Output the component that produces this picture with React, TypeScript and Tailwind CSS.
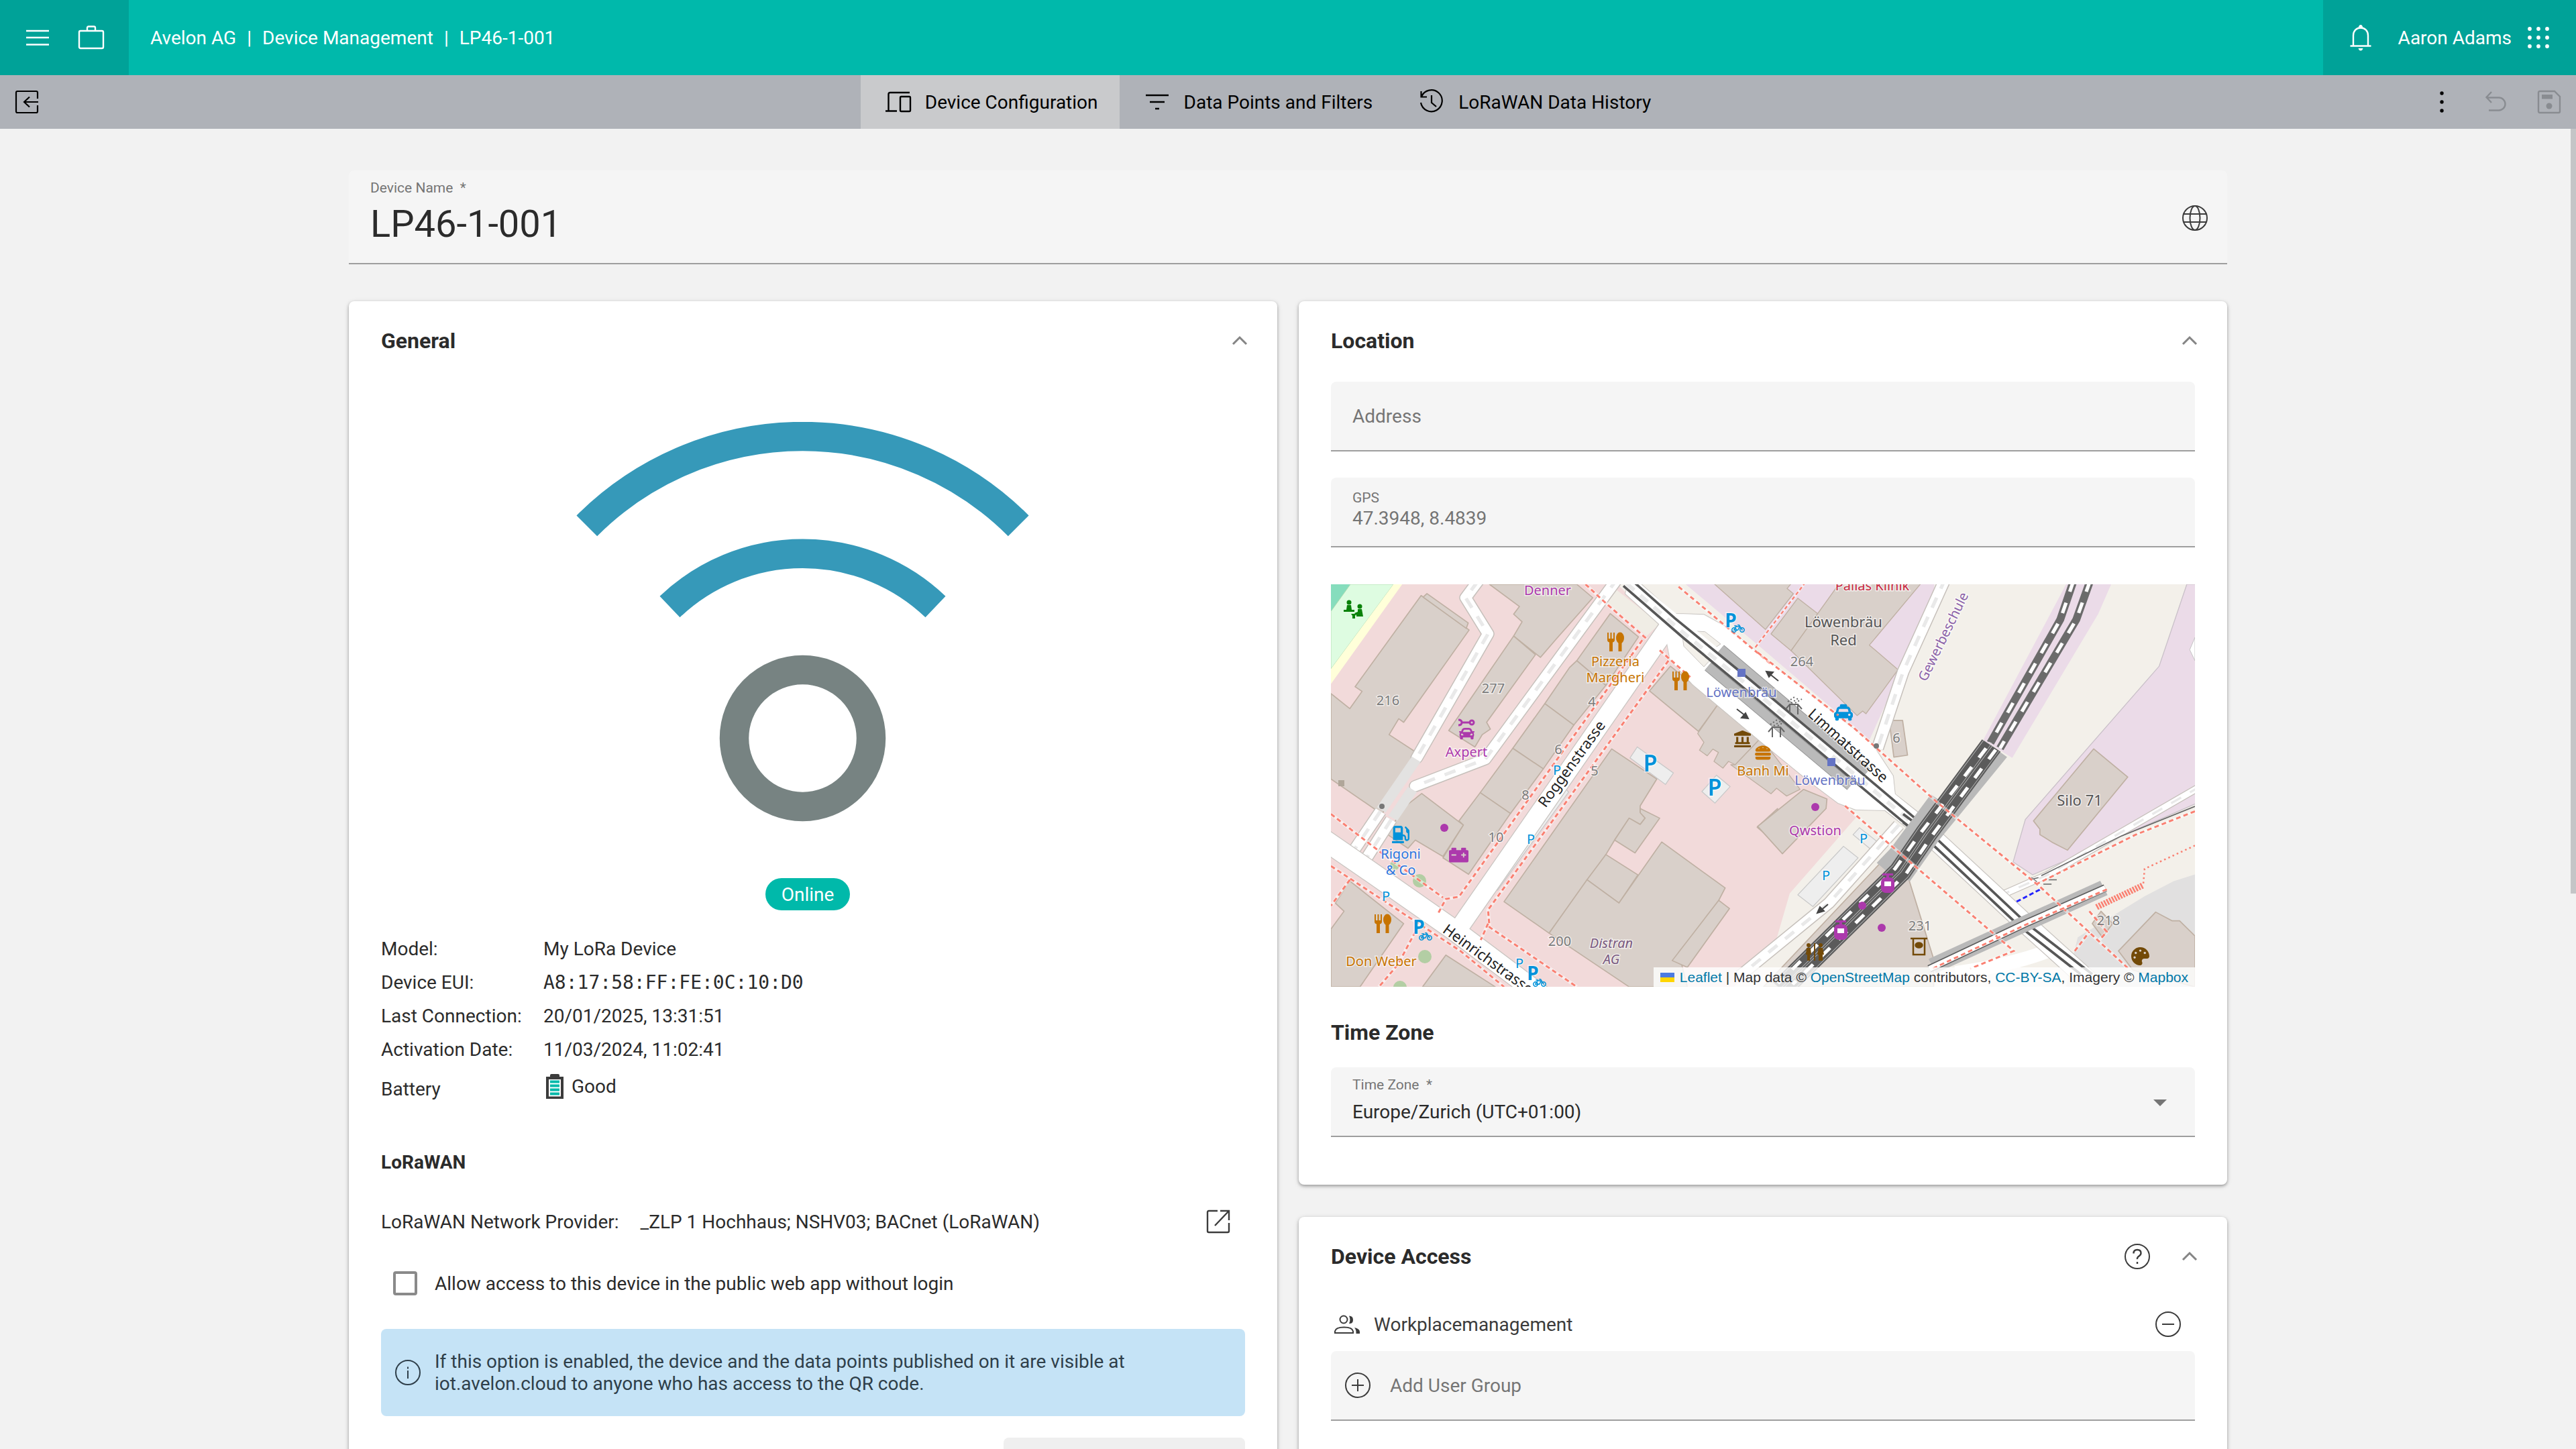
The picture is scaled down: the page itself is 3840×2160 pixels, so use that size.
import type { ReactNode } from "react";
import {
  FaBicycle,
  FaCar,
  FaCarBattery,
  FaGasPump,
  FaHamburger,
  FaLandmark,
  FaPalette,
  FaTaxi,
} from "react-icons/fa";

/* ---------- icons ---------- */

function MenuIcon() {
  return (
    <svg className="h-10 w-10" viewBox="0 0 40 40" stroke="currentColor" strokeWidth="2.6" aria-hidden="true">
      <path d="M3 10H37M3 20H37M3 30.500H37" />
    </svg>
  );
}

function CaseIcon() {
  return (
    <svg className="h-10 w-10" viewBox="0 0 40 40" fill="none" stroke="currentColor" strokeWidth="2.4" aria-hidden="true">
      <rect x="2" y="10" width="36" height="26" rx="2" />
      <path d="M14 10V5.500q0-2 2-2h8q2 0 2 2V10" />
    </svg>
  );
}

function BellIcon() {
  return (
    <svg className="h-10 w-10" viewBox="0 0 40 40" fill="none" stroke="currentColor" strokeWidth="2.4" aria-hidden="true">
      <path d="M9 32V17C9 10 13.500 5.500 20 5.500S31 10 31 17V32M4.500 32.500H35.500" />
      <path d="M16.500 6.500Q17 1 20 1t3.500 5.500ZM16.500 36h7q-1 3.500-3.500 3.500T16.500 36Z" fill="currentColor" stroke="none" />
    </svg>
  );
}

function AppsIcon() {
  const steps = [7, 20, 33];
  return (
    <svg className="h-10 w-10" viewBox="0 0 40 40" fill="currentColor" aria-hidden="true">
      {steps.map((y) => steps.map((x) => <circle key={`${x}-${y}`} cx={x} cy={y} r="2.900" />))}
    </svg>
  );
}

function LeaveIcon() {
  return (
    <svg className="h-10 w-10" viewBox="0 0 40 40" fill="none" stroke="currentColor" strokeWidth="2.200" aria-hidden="true">
      <path d="M36 15V6q0-2-2-2H6Q4 4 4 6V34q0 2 2 2H34q2 0 2-2V25M37 20H16M24 12.500L16 20l8 7.500" />
    </svg>
  );
}

function DevicesIcon() {
  return (
    <svg className="h-10 w-10" viewBox="0 0 40 40" fill="none" stroke="currentColor" strokeWidth="2.400" aria-hidden="true">
      <path d="M37 6H8Q5.500 6 5.500 8.500V33M1 33.500H18" />
      <rect x="23" y="12" width="15" height="22" rx="1.500" />
    </svg>
  );
}

function FilterIcon() {
  return (
    <svg className="h-10 w-10" viewBox="0 0 40 40" stroke="currentColor" strokeWidth="2.400" aria-hidden="true">
      <path d="M3 10H37M9 20H31M17 30H23" />
    </svg>
  );
}

function HistoryIcon() {
  return (
    <svg className="h-10 w-10" viewBox="0 0 40 40" fill="none" stroke="currentColor" strokeWidth="2.200" aria-hidden="true">
      <path d="M5 12A16 16 0 1 1 4 21M4.500 4V12.500H13M20 10V21l7 6" />
    </svg>
  );
}

function DotsIcon() {
  return (
    <svg className="h-10 w-10" viewBox="0 0 40 40" fill="currentColor" aria-hidden="true">
      <circle cx="20" cy="7" r="2.700" />
      <circle cx="20" cy="20" r="2.700" />
      <circle cx="20" cy="33" r="2.700" />
    </svg>
  );
}

function UndoIcon() {
  return (
    <svg className="h-10 w-10" viewBox="0 0 40 40" fill="none" stroke="currentColor" strokeWidth="2.400" aria-hidden="true">
      <path d="M14 5L6.500 13L14 21M6.500 13.500H25A9.500 9.500 0 0 1 25 32.500H10" />
    </svg>
  );
}

function SaveIcon() {
  return (
    <svg className="h-10 w-10" viewBox="0 0 40 40" fill="none" stroke="currentColor" strokeWidth="2.400" aria-hidden="true">
      <path d="M6 4H28L36 12V34q0 2-2 2H6q-2 0-2-2V6q0-2 2-2Z" />
      <rect x="9" y="9" width="16" height="6.500" fill="currentColor" stroke="none" />
      <circle cx="20" cy="26" r="4.500" fill="currentColor" stroke="none" />
    </svg>
  );
}

function GlobeIcon() {
  return (
    <svg className="h-10 w-10" viewBox="0 0 40 40" fill="none" stroke="currentColor" strokeWidth="2" aria-hidden="true">
      <circle cx="20" cy="20" r="18" />
      <ellipse cx="20" cy="20" rx="7.500" ry="18" />
      <path d="M3 14H37M3 26H37" />
    </svg>
  );
}

function ChevronUp() {
  return (
    <svg className="h-7 w-7" viewBox="0 0 28 28" fill="none" stroke="currentColor" strokeWidth="3" aria-hidden="true">
      <path d="M4 19L14 9L24 19" />
    </svg>
  );
}

function RoundIcon({ children }: { children?: ReactNode }) {
  return (
    <svg className="h-10 w-10 shrink-0" viewBox="0 0 40 40" fill="none" stroke="currentColor" strokeWidth="2" aria-hidden="true">
      <circle cx="20" cy="20" r="18" />
      {children}
    </svg>
  );
}

function OpenIcon() {
  return (
    <svg className="h-10 w-10" viewBox="0 0 40 40" fill="none" stroke="currentColor" strokeWidth="2.400" aria-hidden="true">
      <path d="M19 4H6Q4 4 4 6V34q0 2 2 2H34q2 0 2-2V22M23 4H36V18M36 4L15 26" />
    </svg>
  );
}

function GroupIcon() {
  return (
    <svg className="h-10 w-10" viewBox="0 0 40 40" fill="none" stroke="currentColor" strokeWidth="2" aria-hidden="true">
      <circle cx="15" cy="13" r="5.500" />
      <path d="M2 33V30.500Q3 24.500 15.500 24.500T29 30.500V33Z" />
      <path d="M23 7.500q6 0 6 6t-6 5.500q3-5.500 0-11.500ZM31 25q8 1.500 8 6.500V34H33.500Q34 28.500 31 25Z" fill="currentColor" stroke="none" />
    </svg>
  );
}

function BatteryIcon() {
  return (
    <svg className="h-[37px] w-[26px]" viewBox="0 0 26 37" aria-hidden="true">
      <path d="M6 4V2q0-2 2-2H18q2 0 2 2V4h6V37H0V4ZM4 8V33.500H22V8Z" fill="#3c3c3c" fillRule="evenodd" />
      <path d="M6 9.500H20V13.500H6ZM6 15.500H20V19.500H6ZM6 21.500H20V25.500H6ZM6 27.500H20V31.500H6Z" fill="#00b9aa" />
    </svg>
  );
}

function SignalArt() {
  return (
    <svg className="h-[596px] w-[675px]" viewBox="0 0 675 596" fill="none" strokeWidth="43.500" role="img" aria-label="LoRa device">
      <path d="M15.800 154.800A455 455 0 0 1 659.200 154.800" stroke="#3699b9" />
      <path d="M139.500 275.500A287 287 0 0 1 535.500 275.500" stroke="#3699b9" />
      <circle cx="337.500" cy="471.500" r="102" stroke="#778382" />
    </svg>
  );
}

/* ---------- map ---------- */

const WEST = "scale(.4337 .4082) translate(-55 -51)";
const EAST = "translate(660 0) scale(.4337 .4082) translate(-55 -51)";
const CENTRE = "translate(456 -1) scale(.3333)";

const westBuildings = [
  "365,92 530,218 305,555 288,542 255,600 370,680 230,890 55,762 55,450 120,505 162,442 138,425",
  "385,85 527,192 520,212 372,98",
  "600,51 900,51 955,100 830,250 775,318 683,240 712,188 683,160 703,132",
  "683,240 758,308 590,555 603,580 575,600 550,645 460,585",
  "1015,158 1112,243 1000,420 900,330",
  "875,355 900,330 1000,420 890,565 790,487",
  "790,487 890,565 785,725 680,650",
  "680,650 785,725 672,888 568,812",
  "568,812 672,888 528,1110 440,1050 510,930 495,915",
  "367,815 510,930 440,1045 345,985 320,1015 250,965 300,870",
  "1020,652 1175,762 1118,860 1118,880 1135,905 1118,928 1080,905 1030,985 1000,1038 805,1325 650,1210",
  "1118,870 1185,905 1100,1032 1030,985 1080,905 1118,928 1135,905 1118,885",
  "1000,1038 1110,1112 1045,1215 935,1130",
  "1192,992 1410,1160 1388,1205 1385,1215 1250,1395 1280,1521 1080,1521 805,1325 935,1130 1045,1215",
  "1388,1205 1425,1235 1280,1450 1228,1425 1250,1395",
  "120,1135 305,1290 155,1521 55,1521 55,1310 100,1245 70,1215",
  "450,1405 620,1521 370,1521",
  "1222,350 1385,490 1318,588 1150,440",
  "1590,870 1520,938 1600,1010",
];

const centreBuildings = [
  "345,0 690,0 672,22 700,45 575,205",
  "720,65 810,135 690,300 600,225",
  "905,0 1270,0 1040,275 1168,385 1025,582 1010,570 985,590 690,300",
  "360,545 555,690 440,810 410,795 385,825 345,795 365,755 340,740 315,770 280,745 300,710 272,670",
  "555,690 730,920 670,950 625,915 600,940 420,810 440,810",
];

const eastBuildings = [
  "158,800 238,835 235,870 85,1035 0,935",
  "452,548 498,548 515,675 468,682",
  "1155,652 1272,755 1065,1022 1015,995 970,965 970,945 948,915",
  "425,1065 520,1130 605,1420 605,1521 20,1521",
  "1368,1248 1425,1280 1450,1280 1503,1335 1503,1521 1290,1460 1240,1390",
  "1150,1290 1180,1245 1220,1290 1185,1340",
];

const lots = [
  { zone: WEST, points: "1108,645 1232,740 1205,782 1083,685" },
  { zone: WEST, points: "1380,748 1427,790 1375,850 1330,808" },
  { zone: WEST, points: "860,795 872,810 628,1168 618,1155" },
  { zone: EAST, points: "295,1008 345,1050 190,1228 138,1185" },
  { zone: EAST, points: "350,940 410,990 390,1020 328,965" },
];

const footpaths = [
  { zone: WEST, d: "M930 51L1000 120L1140 250M1125 255L495 1192L450 1200L425 1250" },
  { zone: WEST, d: "M1185 292L1290 390M1215 330L595 1240L600 1303L900 1521M595 1290L570 1350" },
  { zone: WEST, d: "M55 890L220 1025L440 1195M55 1080L500 1390L650 1521M345 1320L285 1440L220 1521M120 1130L55 1225" },
  { zone: WEST, d: "M1250 60L1430 220L1570 345" },
  { zone: CENTRE, d: "M530 285L750 0" },
  { zone: EAST, d: "M0 300L330 575L620 850L970 1155L1280 1460" },
  { zone: EAST, d: "M300 860L480 1025L880 1390L730 1455M1090 1390L1140 1320" },
  { zone: EAST, d: "M1503 880L1300 965L960 1145" },
  { zone: EAST, d: "M1200 1165L930 1290L600 1455" },
  { zone: EAST, d: "M1140 1245L1200 1320L1175 1350" },
];

type Label = { text: string; x: number; y: number; fill: string; size?: number; weight?: number; rotate?: number; italic?: boolean };

const GREY = "#7b7b7b";
const FOOD = "#c77400";
const SHOP = "#ac39ac";
const STOP = "#6473c4";
const BLUE = "#0092da";

const labels: Label[] = [
  { text: "Denner", x: 323, y: 16, fill: SHOP },
  { text: "216", x: 85, y: 180, fill: GREY },
  { text: "277", x: 242, y: 162, fill: GREY },
  { text: "4", x: 389, y: 182, fill: GREY },
  { text: "6", x: 339, y: 253, fill: GREY },
  { text: "5", x: 393, y: 285, fill: GREY },
  { text: "8", x: 290, y: 321, fill: GREY },
  { text: "10", x: 246, y: 384, fill: GREY },
  { text: "200", x: 341, y: 539, fill: GREY },
  { text: "264", x: 702, y: 122, fill: GREY },
  { text: "6", x: 843, y: 236, fill: GREY },
  { text: "231", x: 878, y: 516, fill: GREY },
  { text: "218", x: 1159, y: 508, fill: GREY },
  { text: "Pizzeria", x: 424, y: 122, fill: FOOD },
  { text: "Margheri", x: 424, y: 146, fill: FOOD },
  { text: "Banh Mi", x: 644, y: 285, fill: FOOD },
  { text: "Don Weber", x: 75, y: 569, fill: FOOD },
  { text: "Axpert", x: 202, y: 257, fill: SHOP },
  { text: "Qwstion", x: 722, y: 374, fill: SHOP },
  { text: "Rigoni", x: 104, y: 409, fill: "#2b76e0" },
  { text: "& Co", x: 104, y: 433, fill: "#2b76e0" },
  { text: "Distran", x: 418, y: 542, fill: "#7a5a80", italic: true },
  { text: "AG", x: 418, y: 566, fill: "#7a5a80", italic: true },
  { text: "Löwenbräu", x: 764, y: 64, fill: "#555555", size: 22 },
  { text: "Red", x: 764, y: 91, fill: "#555555", size: 22 },
  { text: "Silo 71", x: 1116, y: 330, fill: "#555555", size: 22 },
  { text: "Löwenbräu", x: 612, y: 168, fill: STOP },
  { text: "Löwenbräu", x: 744, y: 299, fill: STOP },
  { text: "Pallas Klinik", x: 807, y: 9, fill: "#c8283f" },
  { text: "Roggenstrasse", x: 365, y: 272, fill: "#222222", size: 22, rotate: -54 },
  { text: "Heinrichstrasse", x: 230, y: 565, fill: "#222222", size: 22, rotate: 36 },
  { text: "Limmatstrasse", x: 766, y: 246, fill: "#222222", size: 22, rotate: 42 },
  { text: "Gewerbeschule", x: 919, y: 81, fill: "#8b62a8", rotate: -64 },
  { text: "P", x: 476, y: 279, fill: BLUE, size: 34, weight: 600 },
  { text: "P", x: 572, y: 315, fill: BLUE, size: 34, weight: 600 },
  { text: "P", x: 337, y: 284, fill: BLUE },
  { text: "P", x: 298, y: 387, fill: BLUE },
  { text: "P", x: 82, y: 472, fill: BLUE },
  { text: "P", x: 281, y: 572, fill: BLUE },
  { text: "P", x: 794, y: 386, fill: BLUE },
  { text: "P", x: 738, y: 441, fill: BLUE },
  { text: "P", x: 596, y: 64, fill: BLUE, size: 28, weight: 700 },
  { text: "P", x: 131, y: 521, fill: BLUE, size: 28, weight: 700 },
  { text: "P", x: 301, y: 590, fill: BLUE, size: 28, weight: 700 },
];

function Cutlery({ x, y }: { x: number; y: number }) {
  return (
    <g transform={`translate(${x} ${y})`} fill={FOOD}>
      <path d="M0 0h2v9h2.500V0h2v9H9V0h2v11q0 2.500-3 3.500V28H3V14.500Q0 13.500 0 11Z" />
      <ellipse cx="19" cy="8" rx="6" ry="8.500" />
      <path d="M16.500 14h5V28h-5Z" />
    </g>
  );
}

function Lift({ x, y }: { x: number; y: number }) {
  return (
    <g transform={`translate(${x} ${y})`}>
      <rect x="0" y="6" width="20" height="23" rx="7" fill={SHOP} />
      <path d="M2 0H18V3H2ZM8 3h4v4H8Z" fill={SHOP} />
      <rect x="5" y="12" width="10" height="7" fill="#ffffff" />
    </g>
  );
}

function Shelter({ x, y }: { x: number; y: number }) {
  return (
    <g transform={`translate(${x} ${y})`} fill="none" stroke="#666666">
      <path d="M0 16L6 9H18L24 16M6 10V24M18 10V24" strokeWidth="2" />
      <path d="M3 5L13-2M8 7L20-1M14 7L24 1" strokeWidth="2" strokeDasharray="2 3" />
    </g>
  );
}

function StreetMap() {
  return (
    <svg
      className="absolute inset-0 h-full w-full bg-[#f3f0ea]"
      viewBox="0 0 1288 600"
      preserveAspectRatio="xMidYMid slice"
      role="img"
      aria-label="Street map around 47.3948, 8.4839"
    >
      {/* land use */}
      <g transform={WEST}>
        <polygon points="270,51 1040,51 1180,200 1862,900 1632,1180 1580,1370 1440,1521 55,1521 55,380" fill="#f2dada" />
        <polygon points="55,51 122,51 55,150" fill="#86ddbd" />
        <polygon points="122,51 270,51 55,360 55,150" fill="#defce1" stroke="#a9d8a9" strokeWidth="2" />
        <polygon points="270,51 300,51 55,415 55,360" fill="#ffffd9" />
        <polygon points="1035,70 1185,195 1140,240 1000,115" fill="#f0ede5" />
      </g>
      <g transform={CENTRE}>
        <polygon points="215,0 1330,0 1330,60 1040,700 560,290" fill="#ebdbe8" />
      </g>
      <g transform={EAST}>
        <polygon points="645,51 500,370 400,650 1000,640 1060,51" fill="#f3f0ea" />
        <polygon points="1060,51 1215,51 1170,160 875,685 775,620" fill="#ebdbe8" />
        <polygon points="1475,51 1510,51 1510,850 945,1112 878,1065 920,910 1380,350" fill="#ebdbe8" stroke="#c9c0c8" strokeWidth="3" />
        <polygon points="1510,1108 1430,1135 1330,1190 1100,1340 1060,1521 1510,1521" fill="#e1e0e0" />
        <polygon points="1503,245 1485,290 1503,330" fill="#ffffff" stroke="#bbbbbb" strokeWidth="2" />
      </g>

      {/* buildings */}
      <g fill="#d9d0ca" stroke="#bfb0a3" strokeWidth="4" strokeLinejoin="round">
        <g transform={WEST}>{westBuildings.map((p) => <polygon key={p} points={p} />)}</g>
        <g transform={CENTRE}>{centreBuildings.map((p) => <polygon key={p} points={p} />)}</g>
        <g transform={EAST}>{eastBuildings.map((p) => <polygon key={p} points={p} />)}</g>
      </g>
      <g fill="#eeeeee" stroke="#c8c8c8" strokeWidth="3">
        {lots.map((l) => <polygon key={l.points} points={l.points} transform={l.zone} />)}
      </g>

      {/* trees */}
      <g fill="#a9cc9b" opacity="0.85">
        <circle cx="132" cy="442" r="10" />
        <circle cx="95" cy="419" r="7" />
        <circle cx="140" cy="555" r="10" />
        <circle cx="103" cy="601" r="10" />
      </g>

      {/* service roads: casing, surface, centre dashes */}
      {[
        { stroke: "#c6c0bb", w: 44, thin: 28, dash: undefined },
        { stroke: "#ffffff", w: 37, thin: 22, dash: undefined },
        { stroke: "#e9e9e9", w: 12, thin: 8, dash: "40 36" },
      ].map((s) => (
        <g key={s.stroke} fill="none" stroke={s.stroke} strokeWidth={s.w} strokeDasharray={s.dash} strokeLinejoin="round">
          <g transform={WEST}>
            <path d="M560 40L518 100L595 232L350 685" strokeLinecap={s.dash ? "butt" : "round"} />
            <path d="M1040 30L585 690L345 788" strokeLinecap={s.dash ? "butt" : "round"} />
            <path d="M225 880L110 1060M262 910L160 1080" />
          </g>
          <g transform={EAST}>
            <path d="M645 30L500 370L412 650M485 930L245 1215L-60 1480" />
            <path d="M1520 790L1000 1110L850 1180" strokeWidth={s.thin} />
          </g>
        </g>
      ))}
      <g transform={WEST} fill="none" stroke="#e3e2e1" strokeWidth="36">
        <path d="M348 690L228 875M335 800L268 905" />
      </g>
      <g transform={EAST} fill="none" stroke="#ffffff" strokeWidth="50">
        <path d="M1010 1385Q880 1440 680 1470" />
      </g>

      {/* streets */}
      {[
        { stroke: "#c9c5c1", extra: 6 },
        { stroke: "#ffffff", extra: 0 },
      ].map((s) => (
        <g key={s.stroke} fill="none" stroke={s.stroke} strokeLinejoin="round">
          <g transform={WEST}>
            <path d="M1215 205L480 1330" strokeWidth={62 + s.extra} />
            <path d="M20 975L170 1085L480 1315L800 1570" strokeWidth={72 + s.extra} />
          </g>
          <g transform={CENTRE}>
            <polygon
              points="-30,-40 165,135 300,140 400,195 1050,715 1145,860 1155,955 1120,1013 980,1010 900,980 780,890 560,710 250,450 150,340 135,260 100,180 -50,45"
              fill="#ffffff"
              strokeWidth={s.extra + 2}
            />
          </g>
          <g transform={EAST}>
            <path d="M380 785L560 935L910 1280L1150 1510" strokeWidth={66 + s.extra} />
          </g>
        </g>
      ))}

      {/* tram line and platforms */}
      <g transform={CENTRE}>
        <polygon points="245,212 305,215 375,270 345,290" fill="#f3f0ea" stroke="#c9c5c1" strokeWidth="3" />
        <polygon points="205,245 325,345 300,372 210,280" fill="#f3f0ea" stroke="#c9c5c1" strokeWidth="3" />
        <path d="M-30 5L1250 1060" fill="none" stroke="#ffffff" strokeWidth="62" />
        <path d="M375 292L1028 845M318 370L955 905" fill="none" stroke="#979797" strokeWidth="46" />
        <path d="M375 292L1028 845M318 370L955 905" fill="none" stroke="#bababa" strokeWidth="40" />
        <path d="M-45 0L190 205L490 450L1020 892L1250 1085" fill="none" stroke="#ffffff" strokeWidth="44" />
        <path d="M-45 0L190 205L490 450L1020 892L1250 1085" fill="none" stroke="#eaeaea" strokeWidth="18" strokeDasharray="44 36" />
        <path d="M-45 -35L170 155L480 408L1030 868L1290 1088" fill="none" stroke="#575757" strokeWidth="11" />
        <path d="M-60 10L205 240L500 485L1010 915L1230 1098" fill="none" stroke="#575757" strokeWidth="11" />
      </g>
      <g transform={EAST} fill="none" stroke="#575757" strokeWidth="9">
        <path d="M500 890L620 985L925 1290L1150 1475M500 920L600 1000L900 1300L1110 1475" />
      </g>

      {/* railway */}
      <g transform={EAST} fill="none">
        <path d="M1085 40L1040 180L800 630M1142 40L1095 180L833 650" stroke="#6b6b6b" strokeWidth="27" />
        <path d="M1085 40L1040 180L800 630M1142 40L1095 180L833 650" stroke="#ffffff" strokeWidth="12" strokeDasharray="40 42" />
        <path d="M835 665L600 970L500 1120" stroke="#b9b9b9" strokeWidth="56" />
        <path d="M640 850L500 1050L450 1105" stroke="#b9b9b9" strokeWidth="110" />
        <path d="M803 640L580 960L490 1100L80 1530" stroke="#5b5b5b" strokeWidth="78" />
        <path d="M803 640L580 960L490 1100L80 1530" stroke="#bdbdbd" strokeWidth="68" />
        <path d="M803 640L580 960L490 1100L80 1530" stroke="#5b5b5b" strokeWidth="64" />
        <path d="M803 640L580 960L490 1100L80 1530" stroke="#bdbdbd" strokeWidth="9" />
        <path d="M803 640L580 960L490 1100L80 1530" stroke="#5b5b5b" strokeWidth="5" />
        <path d="M785 650L563 955L472 1090L70 1508" stroke="#ffffff" strokeWidth="12" strokeDasharray="42 42" />
        <path d="M818 655L600 968L510 1108L120 1512" stroke="#ffffff" strokeWidth="12" strokeDasharray="42 42" />
      </g>

      {/* footbridge */}
      <g transform={EAST} fill="none">
        <path d="M1190 1160L930 1285L600 1445" stroke="#b9b9b9" strokeWidth="58" />
        <path d="M1195 1160L930 1285L590 1455" stroke="#5c5c5c" strokeWidth="28" />
        <path d="M1195 1160L930 1285L590 1455" stroke="#ffffff" strokeWidth="20" />
        <path d="M1165 1230L1325 1150" stroke="#fa8072" strokeWidth="22" strokeDasharray="6 4" />
        <path d="M1503 1005L1330 1090L1325 1150" stroke="#fa8072" strokeWidth="6" strokeDasharray="6 10" />
        <path d="M890 1210L975 1163" stroke="#2222ff" strokeWidth="7" strokeDasharray="16 9" />
        <path d="M1503 862L1250 970L975 1115M935 1130L965 1122M940 1122L960 1138M1000 1130h28M982 1146h28" stroke="#666666" strokeWidth="4" />
      </g>

      {/* footpaths */}
      {footpaths.map((f) => (
        <g key={f.d} transform={f.zone} fill="none">
          <path d={f.d} stroke="#ffffff" strokeOpacity="0.5" strokeWidth="12" />
          <path d={f.d} stroke="#fa8072" strokeWidth="7" strokeDasharray="16 11" />
        </g>
      ))}

      {/* one-way arrows */}
      <g stroke="#444444" fill="#444444" strokeWidth="2">
        <path d="M667 144L652 132M649 130l10 1l-6 7Z" />
        <path d="M605 186L618 196M622 200l-10-1l6-7Z" />
        <path d="M741 477L729 487M725 490l4-9l6 6Z" />
      </g>

      {/* markers */}
      <g fill={STOP}>
        <rect x="606" y="126" width="12" height="12" />
        <rect x="740" y="259" width="12" height="12" />
      </g>
      <g fill={SHOP}>
        <circle cx="169" cy="363" r="6" />
        <circle cx="722" cy="332" r="6" />
        <circle cx="792" cy="479" r="6" />
        <circle cx="821" cy="512" r="6" />
      </g>
      <g fill="#777777">
        <circle cx="76" cy="331" r="4" />
        <circle cx="813" cy="241" r="4" />
        <rect x="11" y="292" width="9" height="9" fill="#b0a699" />
      </g>
      <g fill="#0a820a">
        <circle cx="27" cy="27" r="3.500" />
        <circle cx="43" cy="33" r="3.500" />
        <path d="M24 31h6l1 7h4v3H19v-3h4ZM40 37h6l2 11H38v-2l-3-3 5-2ZM30 44h8l-2 3v4h-4v-4Z" />
      </g>
      <Cutlery x={412} y={72} />
      <Cutlery x={509} y={130} />
      <Cutlery x={65} y={492} />
      <Lift x={820} y={431} />
      <Lift x={750} y={501} />
      <Shelter x={678} y={170} />
      <Shelter x={652} y={204} />
      <g fill="none" stroke={SHOP} strokeWidth="3">
        <path d="M190 202q5 0 5 4t-5 4M195 206H207" />
        <circle cx="210" cy="206" r="3" />
      </g>
      <FaCar x="191" y="211" size="23" color={SHOP} />
      <FaGasPump x="91" y="360" size="26" color={BLUE} />
      <FaCarBattery x="176" y="389" size="29" color={SHOP} />
      <FaLandmark x="601" y="218" size="25" color="#734a08" />
      <FaHamburger x="632" y="239" size="24" color={FOOD} />
      <FaTaxi x="750" y="177" size="28" color={BLUE} />
      <FaBicycle x="597" y="56" size="20" color={BLUE} />
      <FaBicycle x="131" y="515" size="20" color={BLUE} />
      <FaBicycle x="301" y="584" size="20" color={BLUE} />
      <FaPalette x="1193" y="541" size="27" color="#734a08" />
      <g transform="translate(864 526)" fill="none" stroke="#734a08" strokeWidth="2.500">
        <path d="M0 2H25M4 2V26H21V2" />
        <ellipse cx="12.500" cy="12" rx="5" ry="3.500" fill="#734a08" />
      </g>
      <g transform="translate(708 535)" fill="#734a08">
        <circle cx="4" cy="3" r="3" />
        <circle cx="22" cy="3" r="3" />
        <path d="M1 7H7L8 17H6V26H2V17H0ZM19 7h6l2 10h-2v9h-6v-9h-2ZM12 0h2V26h-2Z" />
      </g>

      {labels.map((l) => (
        <text
          key={`${l.text}-${l.x}-${l.y}`}
          x={l.x}
          y={l.y}
          transform={l.rotate ? `rotate(${l.rotate} ${l.x} ${l.y})` : undefined}
          textAnchor="middle"
          fill={l.fill}
          stroke="#ffffff"
          strokeOpacity="0.6"
          strokeWidth="3"
          paintOrder="stroke"
          fontFamily="'Noto Sans', sans-serif"
          fontSize={l.size ?? 20}
          fontWeight={l.weight ?? 400}
          fontStyle={l.italic ? "italic" : "normal"}
        >
          {l.text}
        </text>
      ))}
    </svg>
  );
}

function Attribution() {
  const link = "text-[#0078a8]";
  return (
    <div className="absolute right-0 bottom-0 flex h-[29px] items-center gap-2 bg-white/80 px-[10px] font-['Liberation_Sans',sans-serif] text-[21px] leading-[29px] whitespace-nowrap text-[#333333]">
      <svg className="h-[14px] w-[21px]" viewBox="0 0 21 14" aria-hidden="true">
        <path d="M0 0H21V7H0Z" fill="#4c7be1" />
        <path d="M0 7H21V14H0Z" fill="#ffd500" />
      </svg>
      <p>
        <a className={link} href="#leaflet">Leaflet</a> | Map data © <a className={link} href="#osm">OpenStreetMap</a> contributors,{" "}
        <a className={link} href="#license">CC-BY-SA</a>, Imagery © <a className={link} href="#mapbox">Mapbox</a>
      </p>
    </div>
  );
}

/* ---------- page parts ---------- */

function Card({ children }: { children: ReactNode }) {
  return (
    <section className="rounded-lg bg-white px-12 pt-10 shadow-[0_2px_4px_rgba(0,0,0,0.3),0_2px_8px_rgba(0,0,0,0.12)]">
      {children}
    </section>
  );
}

function CardHeader({ title, children }: { title: string; children?: ReactNode }) {
  return (
    <header className="flex h-[38px] items-center justify-between">
      <h2 className="text-[32px] leading-[38px] font-bold text-[#2b2b2b]">{title}</h2>
      <div className="-mr-[6px] flex items-center gap-11 text-[#3c3c3c]">
        {children}
        <button type="button" aria-label={`Collapse ${title}`} className="text-[#858585]">
          <ChevronUp />
        </button>
      </div>
    </header>
  );
}

const fieldBox = "flex h-[104px] rounded-t-lg border-b-2 border-[#9e9e9e] bg-[#f5f5f5] px-8";

function Tab({ icon, label, active }: { icon: ReactNode; label: string; active?: boolean }) {
  return (
    <button
      type="button"
      role="tab"
      aria-selected={!!active}
      className={`flex h-20 items-center gap-5 pr-8 pl-9 text-[28px] whitespace-nowrap text-black ${active ? "bg-[#c9cacc]" : ""}`}
    >
      {icon}
      {label}
    </button>
  );
}

function Detail({ name, children }: { name: string; children: ReactNode }) {
  return (
    <div className="flex h-[50px] items-center">
      <dt className="w-[242px] shrink-0">{name}</dt>
      <dd>{children}</dd>
    </div>
  );
}

export default function App() {
  return (
    <div className="flex h-screen flex-col overflow-hidden bg-[#f2f2f2] font-['Roboto',sans-serif] text-[28px] leading-[33px] text-[#2b2b2b]">
      <header className="flex h-28 shrink-0 items-stretch bg-[#00b9ab] text-white">
        <div className="flex w-48 items-center gap-10 bg-[#00a298] pl-9">
          <button type="button" aria-label="Menu"><MenuIcon /></button>
          <button type="button" aria-label="Workspace"><CaseIcon /></button>
        </div>
        <nav aria-label="Breadcrumb" className="flex flex-1 items-center gap-4 pl-8">
          <a href="#client">Avelon AG</a>
          <span>|</span>
          <a href="#devices">Device Management</a>
          <span>|</span>
          <a href="#device">LP46-1-001</a>
        </nav>
        <div className="flex items-center bg-[#00a298] pr-9 pl-9">
          <button type="button" aria-label="Notifications"><BellIcon /></button>
          <button type="button" className="ml-9">Aaron Adams</button>
          <button type="button" aria-label="Apps" className="ml-5"><AppsIcon /></button>
        </div>
      </header>

      <div className="grid h-20 shrink-0 grid-cols-[1fr_auto_1fr] items-center bg-[#afb2b8] text-black">
        <button type="button" aria-label="Back" className="flex w-20 justify-center"><LeaveIcon /></button>
        <div role="tablist" className="mr-16 flex">
          <Tab icon={<DevicesIcon />} label="Device Configuration" active />
          <Tab icon={<FilterIcon />} label="Data Points and Filters" />
          <Tab icon={<HistoryIcon />} label="LoRaWAN Data History" />
        </div>
        <div className="flex justify-end">
          <button type="button" aria-label="More" className="flex w-20 justify-center"><DotsIcon /></button>
          <button type="button" aria-label="Undo" disabled className="flex w-20 justify-center text-[#898c91]"><UndoIcon /></button>
          <button type="button" aria-label="Save" disabled className="flex w-20 justify-center text-[#898c91]"><SaveIcon /></button>
        </div>
      </div>

      <div className="relative min-h-0 flex-1 overflow-hidden">
        <main className="mx-auto max-w-[2800px] pt-[62px]">
          <div className="flex h-[140px] items-center rounded-t-lg border-b-2 border-[#9e9e9e] bg-[#f5f5f5] pr-7 pl-8">
            <div className="flex flex-1 flex-col pb-3">
              <label htmlFor="device-name" className="text-[21px] leading-6 text-[#757575]">Device Name&nbsp; *</label>
              <input id="device-name" defaultValue="LP46-1-001" className="mt-[10px] h-16 w-full bg-transparent text-[56px] leading-[64px] outline-none" />
            </div>
            <button type="button" aria-label="Translations" className="pt-1 text-[#3c3c3c]"><GlobeIcon /></button>
          </div>

          <div className="mt-[55px] grid grid-cols-2 items-start gap-8">
            <Card>
              <CardHeader title="General" />
              <div className="mt-[102px] flex justify-center pr-8"><SignalArt /></div>
              <div className="mt-[84px] flex justify-center pr-4">
                <span className="flex h-12 items-center rounded-full bg-[#00b9aa] px-6 text-white">Online</span>
              </div>
              <dl className="mt-8">
                <Detail name="Model:">My LoRa Device</Detail>
                <Detail name="Device EUI:">
                  <span className="font-['DejaVu_Sans_Mono',monospace]">A8:17:58:FF:FE:0C:10:D0</span>
                </Detail>
                <Detail name="Last Connection:">20/01/2025, 13:31:51</Detail>
                <Detail name="Activation Date:">11/03/2024, 11:02:41</Detail>
                <div className="flex h-[60px] items-center">
                  <dt className="w-[242px] shrink-0 pt-2">Battery</dt>
                  <dd className="flex items-center gap-3 pl-1"><BatteryIcon />Good</dd>
                </div>
              </dl>
              <h3 className="mt-[67px] font-bold">LoRaWAN</h3>
              <div className="mt-[52px] flex h-10 items-center">
                <span className="mr-8">LoRaWAN Network Provider:</span>
                <span className="flex-1">_ZLP 1 Hochhaus; NSHV03; BACnet (LoRaWAN)</span>
                <a href="#provider" aria-label="Open network provider" className="mr-5 text-[#3c3c3c]"><OpenIcon /></a>
              </div>
              <label className="mt-[54px] flex h-9 items-center gap-[26px] pl-[18px]">
                <input type="checkbox" className="h-9 w-9 appearance-none rounded border-4 border-[#8a8a8a] bg-white" />
                Allow access to this device in the public web app without login
              </label>
              <div className="mt-[50px] flex h-[130px] items-center gap-5 rounded-lg bg-[#c5e3f6] pr-8 pl-5 text-[#2f3f4a]">
                <RoundIcon><path d="M20 17V29M20 11.500V14.500" /></RoundIcon>
                <p className="max-w-[1160px]">
                  If this option is enabled, the device and the data points published on it are visible at iot.avelon.cloud to anyone who has access to the QR code.
                </p>
              </div>
              <div className="mt-8 flex justify-end">
                <button type="button" aria-label="QR code" className="h-20 w-[360px] rounded-lg bg-[#efefef]" />
              </div>
            </Card>

            <div className="flex flex-col gap-12">
              <Card>
                <CardHeader title="Location" />
                <div className={`mt-[42px] ${fieldBox}`}>
                  <input aria-label="Address" placeholder="Address" className="w-full bg-transparent outline-none placeholder:text-[#757575]" />
                </div>
                <div className={`mt-[39px] flex-col pt-[18px] text-[#757575] ${fieldBox}`}>
                  <label htmlFor="gps" className="text-[21px] leading-6">GPS</label>
                  <input id="gps" defaultValue="47.3948, 8.4839" className="h-9 w-full bg-transparent outline-none" />
                </div>
                <div className="relative mt-[55px] h-[600px] overflow-hidden">
                  <StreetMap />
                  <Attribution />
                </div>
                <h2 className="mt-[49px] text-[32px] leading-[38px] font-bold">Time Zone</h2>
                <div className={`relative mt-[33px] mb-[71px] flex-col pt-[14px] ${fieldBox}`}>
                  <label htmlFor="tz" className="text-[21px] leading-6 text-[#757575]">Time Zone&nbsp; *</label>
                  <select id="tz" className="mt-[10px] h-9 w-full appearance-none bg-transparent outline-none">
                    <option>Europe/Zurich (UTC+01:00)</option>
                  </select>
                  <svg className="pointer-events-none absolute top-12 right-[42px] h-[10px] w-5" viewBox="0 0 20 10" aria-hidden="true">
                    <path d="M0 0H20L10 10Z" fill="#757575" />
                  </svg>
                </div>
              </Card>

              <Card>
                <CardHeader title="Device Access">
                  <button type="button" aria-label="Help">
                    <RoundIcon>
                      <path d="M14.500 15.500q0-5.500 5.500-5.500t5.500 5q0 2.500-3 4.500t-2.500 4.500M20 28v3" strokeWidth="2.400" />
                    </RoundIcon>
                  </button>
                </CardHeader>
                <div className="mt-[42px] flex h-20 items-center pr-5 pl-1 text-[#3c3c3c]">
                  <GroupIcon />
                  <span className="ml-5 flex-1">Workplacemanagement</span>
                  <button type="button" aria-label="Remove Workplacemanagement">
                    <RoundIcon><path d="M11 20H29" /></RoundIcon>
                  </button>
                </div>
                <div className="mb-24 flex h-[104px] items-center gap-7 rounded-t-lg border-b-2 border-[#9e9e9e] bg-[#f5f5f5] px-5 text-[#3c3c3c]">
                  <RoundIcon><path d="M11 20H29M20 11V29" /></RoundIcon>
                  <input aria-label="Add User Group" placeholder="Add User Group" className="w-full bg-transparent outline-none placeholder:text-[#757575]" />
                </div>
              </Card>
            </div>
          </div>
        </main>
        <div className="absolute top-0 right-0 h-[1140px] w-2 bg-[#c4c5c7]" />
      </div>
    </div>
  );
}
